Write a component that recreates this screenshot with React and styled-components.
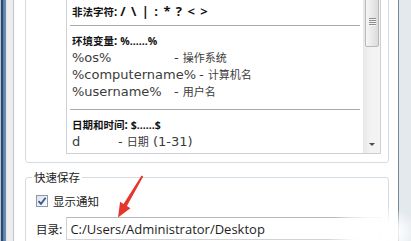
import React from "react";
import styled, { createGlobalStyle } from "styled-components";

const Global = createGlobalStyle`
  html, body { margin: 0; padding: 0; background: #f0f0f0; overflow: hidden; }
  #root { width: 411px; height: 241px; }
`;

const Window = styled.div`
  position: relative;
  display: flex;
  width: 411px;
  height: 241px;
  overflow: hidden;
  font-family: "Open Sans", "Noto Sans CJK SC", sans-serif;
  font-size: 13px;
  color: #3a3a3a;
`;

const FrameLeft = styled.div`
  flex: none;
  width: 7px;
  background: linear-gradient(
    to right,
    #b6c6d7 0,
    #b6c6d7 1px,
    #2a4a70 1px,
    #2a4a70 3px,
    #5b7ca2 3px,
    #7292b4 6px,
    #dfe6ee 6px
  );
`;

const Gutter = styled.div`
  flex: none;
  width: 7px;
  box-sizing: border-box;
  background: #ededed;
  border-right: 1px solid #c3c3c3;
`;

const Sheet = styled.div`
  flex: 1;
  min-width: 0;
  background: #fff;
  display: flex;
  flex-direction: column;
  padding: 0 9px 0 11px;
`;

const FrameRight = styled.div`
  flex: none;
  width: 13px;
  box-sizing: border-box;
  border-left: 1px solid #7a8793;
  background: #e4e9ed;
`;

const GroupBox = styled.fieldset`
  display: block;
  min-width: 0;
  margin: ${(p) => p.$mt || 0}px 0 0 0;
  border: 1px solid #d5dde4;
  border-radius: 3px;
  padding: ${(p) => p.$pad};
`;

const Legend = styled.legend`
  padding: 0 2px;
  margin-left: -4px;
  font-family: "Noto Sans CJK SC", sans-serif;
  font-size: 11.5px;
  line-height: 14px;
  color: #222;
`;

const Zh = styled.span`
  font-family: "Noto Sans CJK SC", sans-serif;
  font-size: ${(p) => p.$size || 11}px;
`;

const TextBox = styled.div`
  height: 171px;
  box-sizing: border-box;
  border: 1px solid #ccd1d8;
  border-top-color: #abadb3;
  display: flex;
  background: #fff;
`;

const TextList = styled.div`
  flex: 1;
  min-width: 0;
  overflow: hidden;
  padding: 2px 3px 0 5px;
`;

const Row = styled.div`
  display: flex;
  align-items: baseline;
  height: 17px;
  line-height: 17px;
  white-space: nowrap;
  font-family: "DejaVu Sans", "Noto Sans CJK SC", sans-serif;
  font-size: 13px;
  color: #3c3c3c;
`;

const HeadRow = styled(Row)`
  font-family: "Open Sans", "Noto Sans CJK SC", sans-serif;
  font-size: 11.5px;
  font-weight: 700;
  color: #121212;
`;

const Symbols = styled.span`
  font-size: 13px;
  word-spacing: 2px;
`;

const Dots = styled.span`
  font-size: 10.5px;
`;

const Key = styled.span`
  flex: none;
  min-width: ${(p) => p.$w}px;
  padding-right: ${(p) => p.$gap || 0}px;
`;

const Separator = styled.div`
  height: 1px;
  background: #a9a9a9;
  margin: ${(p) => p.$top}px 0 6px -2px;
`;

const ScrollTrack = styled.div`
  flex: none;
  width: 17px;
  box-sizing: border-box;
  display: flex;
  flex-direction: column;
  background: linear-gradient(to right, #e7e7e7, #f3f3f3 45%, #f3f3f3);
`;

const Thumb = styled.div`
  height: 63px;
  margin: 0 1px 0 2px;
  box-sizing: border-box;
  border: 1px solid #b8b8b8;
  border-radius: 2px;
  background: linear-gradient(to right, #f6f6f6, #dcdcdc);
  display: flex;
  flex-direction: column;
  justify-content: flex-end;
  align-items: center;
  padding-bottom: 20px;
`;

const Grip = styled.div`
  width: 7px;
  height: 8px;
  background: repeating-linear-gradient(
    to bottom,
    #8e8e8e 0,
    #8e8e8e 1px,
    #f4f4f4 1px,
    #f4f4f4 2px
  );
`;

const ArrowButton = styled.div`
  margin-top: auto;
  height: 17px;
  display: flex;
  align-items: center;
  justify-content: center;
`;

const ArrowDown = styled.span`
  width: 0;
  height: 0;
  border-left: 3px solid transparent;
  border-right: 3px solid transparent;
  border-top: 3px solid #4d4d4d;
`;

const CheckRow = styled.div`
  display: flex;
  align-items: center;
  gap: 5px;
  height: 17px;
  color: #222;
`;

const CheckBox = styled.span`
  width: 12px;
  height: 12px;
  box-sizing: border-box;
  border: 1px solid #8e9aa8;
  background: linear-gradient(135deg, #dde4ec, #fbfcfd);
  display: inline-flex;
  align-items: center;
  justify-content: center;
`;

const DirRow = styled.div`
  display: flex;
  align-items: center;
  gap: 4px;
  margin-top: 8px;
  color: #222;
`;

const DirInput = styled.input`
  flex: 1;
  min-width: 0;
  height: 23px;
  box-sizing: border-box;
  border: 1px solid #cfd3d9;
  border-top-color: #b5b8bd;
  padding: 0 3px;
  font-family: "Open Sans", sans-serif;
  font-size: 13px;
  color: #1e1e1e;
  background: #fff;
  outline: none;
`;

const Overlay = styled.svg`
  position: absolute;
  inset: 0;
  pointer-events: none;
`;

const Watermark = styled.div`
  position: absolute;
  right: 0;
  bottom: 0;
  width: 84px;
  height: 36px;
  pointer-events: none;
  background: radial-gradient(
    ellipse at 55% 75%,
    rgba(255, 255, 255, 0.97) 35%,
    rgba(255, 255, 255, 0) 72%
  );
`;

export default function App() {
  return (
    <>
      <Global />
      <Window>
        <FrameLeft />
        <Gutter />
        <Sheet>
          <GroupBox $mt={-30} $pad="12px 7px 8px 40px">
            <TextBox>
              <TextList>
                <Row>
                  <Zh>文件名长度</Zh>: 1 - 255 <Zh>个字符</Zh>
                </Row>
                <HeadRow>
                  <Zh $size={10.5}>非法字符</Zh>:&nbsp;
                  <Symbols>/ \ | : * ? &lt; &gt;</Symbols>
                </HeadRow>
                <Separator $top={5} />
                <HeadRow>
                  <Zh $size={10.5}>环境变量</Zh>:&nbsp;<Dots>%......%</Dots>
                </HeadRow>
                <Row>
                  <Key $w={102}>%os%</Key>
                  <span>
                    -&nbsp;<Zh>操作系统</Zh>
                  </span>
                </Row>
                <Row>
                  <Key $w={102} $gap={3}>%computername%</Key>
                  <span>
                    -&nbsp;<Zh>计算机名</Zh>
                  </span>
                </Row>
                <Row>
                  <Key $w={102}>%username%</Key>
                  <span>
                    -&nbsp;<Zh>用户名</Zh>
                  </span>
                </Row>
                <Separator $top={9} />
                <HeadRow>
                  <Zh $size={10.5}>日期和时间</Zh>:&nbsp;<Dots>$......$</Dots>
                </HeadRow>
                <Row>
                  <Key $w={46}>d</Key>
                  <span>
                    -&nbsp;<Zh>日期</Zh> (1-31)
                  </span>
                </Row>
              </TextList>
              <ScrollTrack>
                <Thumb>
                  <Grip />
                </Thumb>
                <ArrowButton>
                  <ArrowDown />
                </ArrowButton>
              </ScrollTrack>
            </TextBox>
          </GroupBox>

          <GroupBox $mt={7} $pad="8px 7px 10px 10px">
            <Legend>快速保存</Legend>
            <CheckRow>
              <CheckBox>
                <svg width="10" height="10" viewBox="0 0 10 10">
                  <path
                    d="M1.5 5.2 L4 7.8 L8.6 1.8"
                    fill="none"
                    stroke="#3a5492"
                    strokeWidth="1.8"
                  />
                </svg>
              </CheckBox>
              <Zh $size={11.5}>显示通知</Zh>
            </CheckRow>
            <DirRow>
              <span>
                <Zh $size={11.5}>目录</Zh>:
              </span>
              <DirInput readOnly defaultValue="C:/Users/Administrator/Desktop" />
            </DirRow>
          </GroupBox>
        </Sheet>
        <FrameRight />

        <Overlay width="411" height="241" viewBox="0 0 411 241">
          <polygon
            points="141.6,175.4 143.2,176.4 126.9,206.1 130.4,208.2 118,217.5 120.1,201.8 123.5,204.1"
            fill="#e5352c"
          />
        </Overlay>
        <Watermark />
      </Window>
    </>
  );
}
